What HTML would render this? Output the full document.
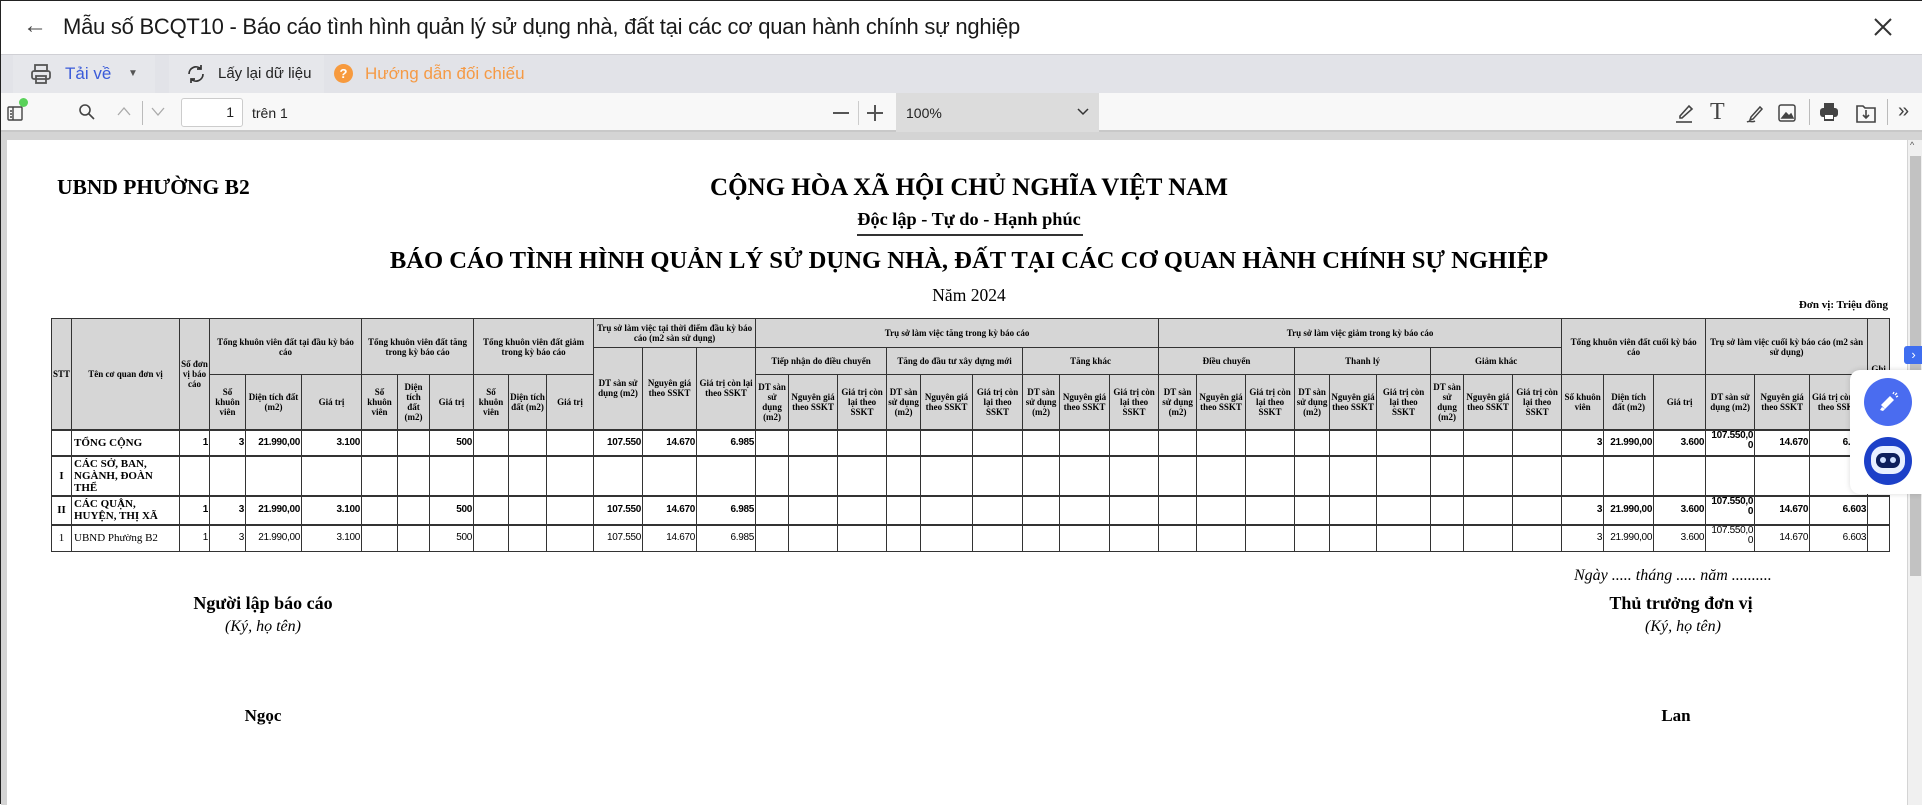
<!DOCTYPE html>
<html><head><meta charset="utf-8">
<style>
*{box-sizing:border-box;margin:0;padding:0}
body{width:1922px;height:804px;overflow:hidden;background:#fff;font-family:"Liberation Sans",sans-serif;position:relative;border:1px solid #222}
.abs{position:absolute}
#title{left:0;top:0;width:1922px;height:54px;background:#fff;border-bottom:1px solid #d0d0d5}
#tb{left:0;top:54px;width:1922px;height:38px;background:#e2e3e8}
#pt{left:0;top:92px;width:1922px;height:39px;background:#f8f8f8;border-bottom:2px solid #c8c8c8}
#viewer{left:0;top:131px;width:1922px;height:673px;background:#d4d4d4}
#page{left:6px;top:139px;width:1900px;height:665px;background:#fff}
.tnr{font-family:"Liberation Serif",serif}
table{border-collapse:collapse;table-layout:fixed;position:absolute;left:50px;top:317px;font-family:"Liberation Serif",serif}
td{border:1px solid #333;font-size:9px;line-height:10px;text-align:center;vertical-align:middle;overflow:hidden;padding:0 1px}
thead td{background:#d6d6d6;font-weight:bold}
tbody td{background:#fff}
tbody tr{border-top:2px solid #333}
.n{font-family:"Liberation Sans",sans-serif;text-align:right;font-size:10px;letter-spacing:-0.3px}
.b{font-weight:bold}
.nm{text-align:left;font-size:11px;line-height:12px;padding-left:2px}
</style></head><body>
<div id="title" class="abs">
 <div class="abs" style="left:22px;top:11px;font-size:24px;color:#444">&#8592;</div>
 <div class="abs" style="left:62px;top:13px;font-size:22px;color:#1a1a1a;letter-spacing:-0.25px">Mẫu số BCQT10 - Báo cáo tình hình quản lý sử dụng nhà, đất tại các cơ quan hành chính sự nghiệp</div>
 <svg class="abs" style="left:1872px;top:16px" width="20" height="20" viewBox="0 0 20 20"><path d="M2 2L18 18M18 2L2 18" stroke="#333" stroke-width="2"/></svg>
</div>
<div id="tb" class="abs">
 <div class="abs" style="left:12px;top:0;width:142px;height:38px;background:#e6e7eb"></div>
 <svg class="abs" style="left:29px;top:8px" width="22" height="22" viewBox="0 0 22 22" fill="none" stroke="#555" stroke-width="1.8"><rect x="5" y="2" width="12" height="6"/><rect x="2" y="8" width="18" height="8" rx="2"/><rect x="6" y="13" width="10" height="7"/></svg>
 <div class="abs" style="left:64px;top:9px;font-size:17px;color:#3a5bd9">Tải về</div>
 <div class="abs" style="left:127px;top:13px;font-size:10px;color:#555">&#9660;</div>
 <div class="abs" style="left:168px;top:0;width:155px;height:38px;background:#e6e7eb"></div>
 <svg class="abs" style="left:184px;top:9px" width="22" height="20" viewBox="0 0 22 20" fill="none" stroke="#333" stroke-width="1.7"><path d="M4 10a7 7 0 0 1 12-5M18 10a7 7 0 0 1-12 5"/><path d="M16 1v4h-4M6 19v-4h4"/></svg>
 <div class="abs" style="left:217px;top:10px;font-size:15px;color:#222">Lấy lại dữ liệu</div>
 <div class="abs" style="left:333px;top:9px;width:19px;height:19px;border-radius:50%;background:#f79a3e;color:#fff;font-size:13px;font-weight:bold;text-align:center;line-height:19px">?</div>
 <div class="abs" style="left:364px;top:9px;font-size:17px;color:#f59a45">Hướng dẫn đối chiếu</div>
</div>
<div id="pt" class="abs">
 <svg class="abs" style="left:5px;top:10px" width="20" height="20" viewBox="0 0 20 20" fill="none" stroke="#444" stroke-width="1.4"><rect x="2" y="4" width="14" height="13" rx="1"/><path d="M7 4v13M4 8h2M4 11h2M4 14h2"/></svg>
 <div class="abs" style="left:18px;top:5px;width:9px;height:9px;border-radius:50%;background:#5ad25a"></div>
 <svg class="abs" style="left:77px;top:10px" width="18" height="18" viewBox="0 0 18 18" fill="none" stroke="#444" stroke-width="1.6"><circle cx="7" cy="7" r="5"/><path d="M11 11l5 5"/></svg>
 <svg class="abs" style="left:116px;top:13px" width="14" height="10" viewBox="0 0 14 10" fill="none" stroke="#aaa" stroke-width="1.3"><path d="M1 9l6-7 6 7"/></svg>
 <div class="abs" style="left:141px;top:8px;width:1px;height:24px;background:#bbb"></div>
 <svg class="abs" style="left:150px;top:14px" width="14" height="10" viewBox="0 0 14 10" fill="none" stroke="#aaa" stroke-width="1.3"><path d="M1 1l6 7 6-7"/></svg>
 <div class="abs" style="left:180px;top:5px;width:62px;height:29px;background:#fff;border:1px solid #ccc;border-radius:3px;text-align:right;padding-right:8px;line-height:27px;font-size:14px;color:#222">1</div>
 <div class="abs" style="left:251px;top:12px;font-size:14px;color:#222">trên 1</div>
 <div class="abs" style="left:832px;top:19px;width:16px;height:1.5px;background:#555"></div>
 <div class="abs" style="left:857px;top:8px;width:1px;height:24px;background:#ccc"></div>
 <div class="abs" style="left:866px;top:19px;width:16px;height:1.5px;background:#555"></div>
 <div class="abs" style="left:873px;top:12px;width:1.5px;height:16px;background:#555"></div>
 <div class="abs" style="left:895px;top:0;width:203px;height:39px;background:#dcdcdc"></div>
 <div class="abs" style="left:905px;top:12px;font-size:14px;color:#222">100%</div>
 <svg class="abs" style="left:1076px;top:15px" width="12" height="8" viewBox="0 0 12 8" fill="none" stroke="#333" stroke-width="1.5"><path d="M1 1l5 5 5-5"/></svg>
 <svg class="abs" style="left:1672px;top:9px" width="22" height="22" viewBox="0 0 22 22" fill="none" stroke="#444" stroke-width="1.6"><path d="M7 14l9-10 3 3-10 9H7z"/><path d="M3 20h16"/></svg>
 <div class="abs tnr" style="left:1709px;top:6px;font-size:24px;color:#444">T</div>
 <svg class="abs" style="left:1743px;top:9px" width="22" height="22" viewBox="0 0 22 22" fill="none" stroke="#444" stroke-width="1.5"><path d="M7 15l9-10 2 2-9 10-3 1z"/><path d="M3 20c3-2 5 1 8-1"/></svg>
 <svg class="abs" style="left:1776px;top:10px" width="20" height="20" viewBox="0 0 20 20" fill="none" stroke="#444" stroke-width="1.5"><rect x="2" y="2" width="16" height="16" rx="2"/><path d="M5 15l4-5 3 3 2-2 2 4z" fill="#444"/></svg>
 <div class="abs" style="left:1808px;top:6px;width:1px;height:26px;background:#bbb"></div>
 <svg class="abs" style="left:1818px;top:9px" width="20" height="20" viewBox="0 0 20 20"><rect x="5" y="1" width="10" height="5" fill="#444"/><rect x="1" y="6" width="18" height="9" rx="3" fill="#444"/><rect x="5" y="12" width="10" height="7" fill="#444"/><rect x="6" y="13" width="8" height="4" fill="#fff"/></svg>
 <svg class="abs" style="left:1854px;top:9px" width="22" height="22" viewBox="0 0 22 22" fill="none" stroke="#444" stroke-width="1.6"><path d="M2 4h6l2 2h10v14H2z"/><path d="M11 8v8M8 13l3 3 3-3"/></svg>
 <div class="abs" style="left:1886px;top:6px;width:1px;height:26px;background:#bbb"></div>
 <div class="abs" style="left:1897px;top:7px;font-size:20px;color:#444">&#187;</div>
</div>
<div id="viewer" class="abs"></div>
<div id="page" class="abs"></div>
<div class="abs" style="left:1907px;top:139px;width:15px;height:665px;background:#f0f0f0"></div>
<div class="abs" style="left:1909px;top:155px;width:11px;height:420px;background:#c2c2c2"></div>
<div class="abs" style="left:1909px;top:139px;font-size:9px;color:#555">^</div>

<div class="abs tnr b" style="left:56px;top:174px;font-size:21.5px">UBND PHƯỜNG B2</div>
<div class="abs tnr b" style="left:0;width:1936px;text-align:center;top:173px;font-size:25px">CỘNG HÒA XÃ HỘI CHỦ NGHĨA VIỆT NAM</div>
<div class="abs tnr b" style="left:0;width:1936px;text-align:center;top:208px;font-size:18.3px">Độc lập - Tự do - Hạnh phúc</div>
<div class="abs" style="left:856px;top:233px;width:226px;height:2px;background:#333"></div>
<div class="abs tnr b" style="left:0;width:1936px;text-align:center;top:246px;font-size:24.6px">BÁO CÁO TÌNH HÌNH QUẢN LÝ SỬ DỤNG NHÀ, ĐẤT TẠI CÁC CƠ QUAN HÀNH CHÍNH SỰ NGHIỆP</div>
<div class="abs tnr" style="left:0;width:1936px;text-align:center;top:284px;font-size:17.5px">Năm 2024</div>
<div class="abs tnr b" style="left:1780px;width:107px;text-align:right;top:298px;font-size:11px">Đơn vị: Triệu đồng</div>

<table style="width:1838px">
<colgroup>
<col style="width:20px"><col style="width:108px"><col style="width:30px"><col style="width:36px"><col style="width:56px"><col style="width:60px">
<col style="width:36px"><col style="width:32px"><col style="width:44px"><col style="width:35px"><col style="width:38px"><col style="width:47px">
<col style="width:49px"><col style="width:54px"><col style="width:59px">
<col style="width:33px"><col style="width:49px"><col style="width:49px"><col style="width:34px"><col style="width:52px"><col style="width:50px"><col style="width:37px"><col style="width:50px"><col style="width:49px">
<col style="width:38px"><col style="width:49px"><col style="width:49px"><col style="width:35px"><col style="width:47px"><col style="width:54px"><col style="width:33px"><col style="width:49px"><col style="width:49px">
<col style="width:42px"><col style="width:50px"><col style="width:52px"><col style="width:49px"><col style="width:55px"><col style="width:58px"><col style="width:22px">
</colgroup>
<thead>
<tr style="height:29px">
<td rowspan="3">STT</td><td rowspan="3">Tên cơ quan đơn vị</td><td rowspan="3">Số đơn vị báo cáo</td>
<td colspan="3" rowspan="2">Tổng khuôn viên đất tại đầu kỳ báo cáo</td>
<td colspan="3" rowspan="2">Tổng khuôn viên đất tăng trong kỳ báo cáo</td>
<td colspan="3" rowspan="2">Tổng khuôn viên đất giảm trong kỳ báo cáo</td>
<td colspan="3">Trụ sở làm việc tại thời điểm đầu kỳ báo cáo (m2 sàn sử dụng)</td>
<td colspan="9">Trụ sở làm việc tăng trong kỳ báo cáo</td>
<td colspan="9">Trụ sở làm việc giảm trong kỳ báo cáo</td>
<td colspan="3" rowspan="2">Tổng khuôn viên đất cuối kỳ báo cáo</td>
<td colspan="3" rowspan="2">Trụ sở làm việc cuối kỳ báo cáo (m2 sàn sử dụng)</td>
<td rowspan="3">Ghi chú</td>
</tr>
<tr style="height:27px">
<td rowspan="2">DT sàn sử dụng (m2)</td><td rowspan="2">Nguyên giá theo SSKT</td><td rowspan="2">Giá trị còn lại theo SSKT</td>
<td colspan="3">Tiếp nhận do điều chuyển</td><td colspan="3">Tăng do đầu tư xây dựng mới</td><td colspan="3">Tăng khác</td>
<td colspan="3">Điều chuyển</td><td colspan="3">Thanh lý</td><td colspan="3">Giảm khác</td>
</tr>
<tr style="height:55px">
<td>Số khuôn viên</td><td>Diện tích đất (m2)</td><td>Giá trị</td>
<td>Số khuôn viên</td><td>Diện tích đất (m2)</td><td>Giá trị</td>
<td>Số khuôn viên</td><td>Diện tích đất (m2)</td><td>Giá trị</td>
<td>DT sàn sử dụng (m2)</td><td>Nguyên giá theo SSKT</td><td>Giá trị còn lại theo SSKT</td>
<td>DT sàn sử dụng (m2)</td><td>Nguyên giá theo SSKT</td><td>Giá trị còn lại theo SSKT</td>
<td>DT sàn sử dụng (m2)</td><td>Nguyên giá theo SSKT</td><td>Giá trị còn lại theo SSKT</td>
<td>DT sàn sử dụng (m2)</td><td>Nguyên giá theo SSKT</td><td>Giá trị còn lại theo SSKT</td>
<td>DT sàn sử dụng (m2)</td><td>Nguyên giá theo SSKT</td><td>Giá trị còn lại theo SSKT</td>
<td>DT sàn sử dụng (m2)</td><td>Nguyên giá theo SSKT</td><td>Giá trị còn lại theo SSKT</td>
<td>Số khuôn viên</td><td>Diện tích đất (m2)</td><td>Giá trị</td>
<td>DT sàn sử dụng (m2)</td><td>Nguyên giá theo SSKT</td><td>Giá trị còn lại theo SSKT</td>
</tr>
</thead>
<tbody>
<tr style="height:26px" class="b">
<td></td><td class="nm b">TỔNG CỘNG</td><td class="n b">1</td><td class="n b">3</td><td class="n b">21.990,00</td><td class="n b">3.100</td><td></td><td></td><td class="n b">500</td><td></td><td></td><td></td><td class="n b">107.550</td><td class="n b">14.670</td><td class="n b">6.985</td>
<td></td><td></td><td></td><td></td><td></td><td></td><td></td><td></td><td></td><td></td><td></td><td></td><td></td><td></td><td></td><td></td><td></td><td></td>
<td class="n b">3</td><td class="n b">21.990,00</td><td class="n b">3.600</td><td class="n b" style="vertical-align:top">107.550,0<br>0</td><td class="n b">14.670</td><td class="n b">6.603</td><td></td>
</tr>
<tr style="height:40px">
<td class="b" style="font-size:11px">I</td><td class="nm b">CÁC SỞ, BAN, NGÀNH, ĐOÀN THỂ</td>
<td></td><td></td><td></td><td></td><td></td><td></td><td></td><td></td><td></td><td></td><td></td><td></td><td></td><td></td><td></td><td></td><td></td><td></td><td></td><td></td><td></td><td></td><td></td><td></td><td></td><td></td><td></td><td></td><td></td><td></td><td></td><td></td><td></td><td></td><td></td><td></td><td></td>
</tr>
<tr style="height:29px">
<td class="b" style="font-size:11px">II</td><td class="nm b">CÁC QUẬN, HUYỆN, THỊ XÃ</td><td class="n b">1</td><td class="n b">3</td><td class="n b">21.990,00</td><td class="n b">3.100</td><td></td><td></td><td class="n b">500</td><td></td><td></td><td></td><td class="n b">107.550</td><td class="n b">14.670</td><td class="n b">6.985</td>
<td></td><td></td><td></td><td></td><td></td><td></td><td></td><td></td><td></td><td></td><td></td><td></td><td></td><td></td><td></td><td></td><td></td><td></td>
<td class="n b">3</td><td class="n b">21.990,00</td><td class="n b">3.600</td><td class="n b" style="vertical-align:top">107.550,0<br>0</td><td class="n b">14.670</td><td class="n b">6.603</td><td></td>
</tr>
<tr style="height:27px">
<td style="font-size:11px">1</td><td class="nm">UBND Phường B2</td><td class="n">1</td><td class="n">3</td><td class="n">21.990,00</td><td class="n">3.100</td><td></td><td></td><td class="n">500</td><td></td><td></td><td></td><td class="n">107.550</td><td class="n">14.670</td><td class="n">6.985</td>
<td></td><td></td><td></td><td></td><td></td><td></td><td></td><td></td><td></td><td></td><td></td><td></td><td></td><td></td><td></td><td></td><td></td><td></td>
<td class="n">3</td><td class="n">21.990,00</td><td class="n">3.600</td><td class="n" style="vertical-align:top">107.550,0<br>0</td><td class="n">14.670</td><td class="n">6.603</td><td></td>
</tr>
</tbody>
</table>

<div class="abs tnr" style="left:1573px;top:566px;font-size:16px;font-style:italic">Ngày ..... tháng ..... năm ..........</div>
<div class="abs tnr b" style="left:112px;width:300px;text-align:center;top:592px;font-size:18px">Người lập báo cáo</div>
<div class="abs tnr" style="left:112px;width:300px;text-align:center;top:617px;font-size:16px;font-style:italic">(Ký, họ tên)</div>
<div class="abs tnr b" style="left:112px;width:300px;text-align:center;top:705px;font-size:17px">Ngọc</div>
<div class="abs tnr b" style="left:1530px;width:300px;text-align:center;top:592px;font-size:18px">Thủ trưởng đơn vị</div>
<div class="abs tnr" style="left:1532px;width:300px;text-align:center;top:617px;font-size:16px;font-style:italic">(Ký, họ tên)</div>
<div class="abs tnr b" style="left:1525px;width:300px;text-align:center;top:705px;font-size:17px">Lan</div>

<div class="abs" style="left:1903px;top:345px;width:19px;height:18px;background:#3f6ef0;border-radius:3px 0 0 3px;color:#fff;font-size:13px;line-height:18px;text-align:center">&#8250;</div>
<div class="abs" style="left:1849px;top:369px;width:73px;height:124px;background:#fff;border-radius:10px 0 0 10px;box-shadow:0 0 6px rgba(0,0,0,0.15)"></div>
<div class="abs" style="left:1863px;top:377px;width:48px;height:48px;border-radius:50%;background:#4a6cf0"></div>
<svg class="abs" style="left:1876px;top:390px" width="22" height="22" viewBox="0 0 22 22"><path d="M4 14l9-9 4 4-9 9z" fill="#fff"/><path d="M5 16l-2 3 3 1 2-2z" fill="#fff"/><path d="M16 3l1-2M19 6l2-1M18 4l2-2" stroke="#fff" stroke-width="1.3"/></svg>
<div class="abs" style="left:1863px;top:436px;width:48px;height:48px;border-radius:50%;background:#1c40c8"></div>
<div class="abs" style="left:1870px;top:445px;width:34px;height:28px;border-radius:12px;background:#e8f0ff"></div>
<div class="abs" style="left:1875px;top:452px;width:24px;height:15px;border-radius:7px;background:#0d1f5c"></div>
<div class="abs" style="left:1879px;top:456px;width:6px;height:6px;border-radius:50%;background:#cfe0ff"></div>
<div class="abs" style="left:1889px;top:456px;width:6px;height:6px;border-radius:50%;background:#cfe0ff"></div>
</body></html>
